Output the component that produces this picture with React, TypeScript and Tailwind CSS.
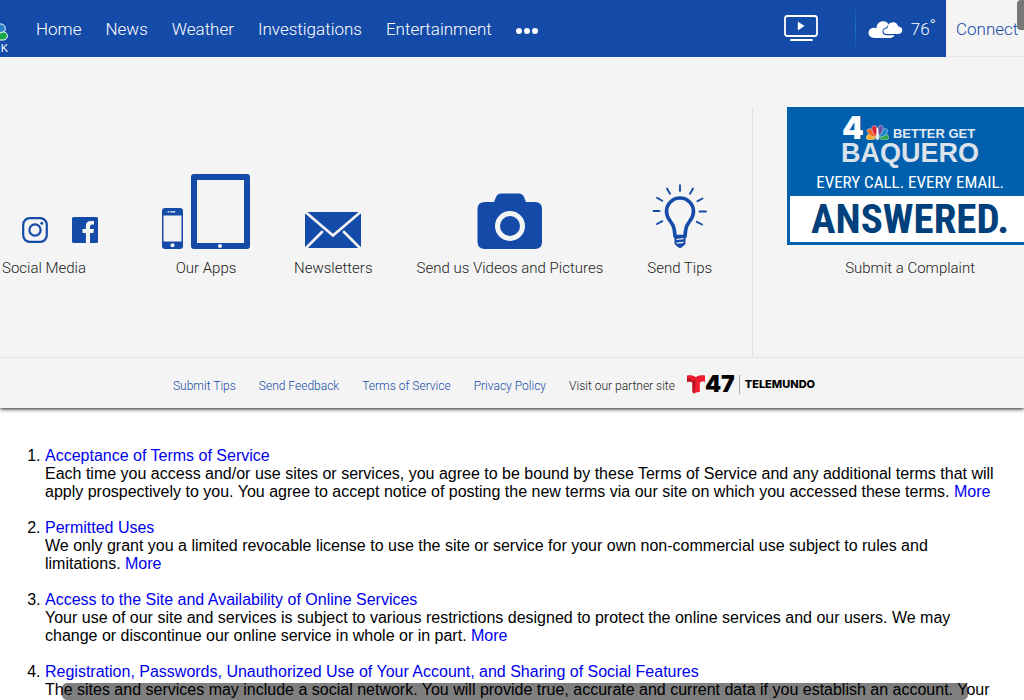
import React from "react";

const navLinks = ["Home", "News", "Weather", "Investigations", "Entertainment"];
const footerLinks = ["Submit Tips", "Send Feedback", "Terms of Service", "Privacy Policy"];

const terms = [
  {
    title: "Acceptance of Terms of Service",
    body: "Each time you access and/or use sites or services, you agree to be bound by these Terms of Service and any additional terms that will apply prospectively to you. You agree to accept notice of posting the new terms via our site on which you accessed these terms.",
    more: true,
  },
  {
    title: "Permitted Uses",
    body: "We only grant you a limited revocable license to use the site or service for your own non-commercial use subject to rules and limitations.",
    more: true,
  },
  {
    title: "Access to the Site and Availability of Online Services",
    body: "Your use of our site and services is subject to various restrictions designed to protect the online services and our users. We may change or discontinue our online service in whole or in part.",
    more: true,
  },
  {
    title: "Registration, Passwords, Unauthorized Use of Your Account, and Sharing of Social Features",
    body: "The sites and services may include a social network. You will provide true, accurate and current data if you establish an account. Your",
    more: false,
  },
];

function StationLogo() {
  return (
    <a href="#" aria-label="Station home" className="flex h-full w-2 shrink-0 flex-col justify-end overflow-hidden pb-[3px]">
      <svg width="8" height="19" viewBox="0 0 8 19" className="shrink-0">
        <ellipse cx="0.500" cy="5.500" rx="4.800" ry="4.600" fill="#2583c6" stroke="#fff" strokeWidth="1" />
        <path d="M-4 17V12.500C-1 12.500 0 8.700 3.400 8.900C6.200 9.100 7.500 11 7.400 13C7.300 15.200 5.600 17 3.500 17Z" fill="#16a84a" stroke="#fff" strokeWidth="1" />
      </svg>
      <span className="flex h-3 justify-end font-['Liberation_Sans',sans-serif] text-[11px] leading-3 font-normal text-white">K</span>
    </a>
  );
}

function Header() {
  return (
    <header className="relative z-10 flex h-[57px] w-full items-center bg-[#144ba8] font-['Roboto',sans-serif] font-light">
      <StationLogo />
      <nav className="ml-7 flex items-center gap-6 text-[17px] leading-6 text-white">
        {navLinks.map((l) => (
          <a key={l} href="#" className="whitespace-nowrap">{l}</a>
        ))}
        <button type="button" aria-label="More sections" className="pt-1">
          <svg width="23" height="8" viewBox="0 0 23 8" fill="#fff">
            <circle cx="3" cy="4" r="3" />
            <circle cx="11" cy="4" r="3" />
            <circle cx="19" cy="4" r="3" />
          </svg>
        </button>
      </nav>
      <div className="ml-auto flex h-full items-center">
        <a href="#" aria-label="Watch TV" className="mr-9 pb-[2px]">
          <svg width="36" height="28" viewBox="0 0 36 28" fill="none" stroke="#fff">
            <rect x="2" y="2" width="32" height="20" rx="2.500" strokeWidth="1.800" />
            <path d="M14.800 7.500L21.500 12L14.800 16.500Z" fill="#fff" stroke="none" />
            <path d="M8 26H29" strokeWidth="1.800" strokeLinecap="round" />
          </svg>
        </a>
        <a href="#" className="flex h-full items-center text-white">
          <span className="h-[50px] w-px bg-linear-to-b from-[#144ba8] via-[#1b73c8] to-[#144ba8]" />
          <svg width="36" height="20" viewBox="0 0 36 20" className="mt-[2px] ml-3" fill="#fff">
            <path d="M6.500 18C3 18 0.500 15.800 0.500 12.800C0.500 10 2.600 8 5.600 7.700C5.900 7.500 8 7.900 8.600 8.300C8.300 4.500 11 1.600 14.500 1.300C17.400 1 19.700 2.500 20.700 4.500C19.300 5.300 18.800 6.300 18.500 7.500C15.500 8 14.200 9.800 14.500 12C14.800 14.200 16.500 15.200 19 15.200H26.500C25.500 17 24 18 22 18Z" />
            <path d="M19 14C16.800 14 15.500 12.700 15.500 11C15.500 9.200 17.100 8.200 19.500 8.500C19.500 5 21.500 2.200 25 2.200C28 2.200 29.800 4.200 30.100 6.500C32.500 6.500 34.300 8 34.300 10.200C34.300 12.500 32.500 14 30 14Z" />
          </svg>
          <span className="ml-[7px] text-[17px] leading-6">76</span>
          <span className="mr-[10px] mb-2 text-[17px] leading-6">°</span>
        </a>
        <a href="#" className="flex h-full w-[78px] items-center border-b border-[#e6e6e6] bg-[#f4f4f4] pt-[3px] pl-[10px] text-[17px] text-[#144ba8]">
          Connect
        </a>
      </div>
    </header>
  );
}

function AppsIcon() {
  return (
    <svg width="88" height="76" viewBox="0 0 88 76" fill="#144ba8">
      <path fillRule="evenodd" d="M3 35H18A3 3 0 0 1 21 38V73A3 3 0 0 1 18 76H3A3 3 0 0 1 0 73V38A3 3 0 0 1 3 35ZM1.500 42.500V68.500H19.500V42.500Z" />
      <path fillRule="evenodd" d="M32 1H85A3 3 0 0 1 88 4V73A3 3 0 0 1 85 76H32A3 3 0 0 1 29 73V4A3 3 0 0 1 32 1ZM35 7V70H82V7Z" />
      <path d="M6 38.800H13" stroke="#f4f4f4" strokeWidth="1.200" strokeLinecap="round" strokeDasharray="1 1.700 6" />
      <circle cx="10.500" cy="72.200" r="2" fill="#f4f4f4" />
      <circle cx="58" cy="73" r="2" fill="#f4f4f4" />
    </svg>
  );
}

function MailIcon() {
  return (
    <svg width="58" height="38" viewBox="0 0 58 38">
      <rect x="1" y="1" width="56" height="36" fill="#144ba8" />
      <path d="M2 1.500L29 24.500L56 1.500M2 37L18 21M56 37L40 21" fill="none" stroke="#f4f4f4" strokeWidth="2.600" strokeLinecap="round" />
    </svg>
  );
}

function CameraIcon() {
  return (
    <svg width="66" height="56" viewBox="0 0 66 56">
      <path d="M8 9H17L19 4Q20.500 0.500 24 0.500H42Q45.500 0.500 47 4L49 9H58Q65 9 65 16V49Q65 56 58 56H8Q0.500 56 0.500 49V16Q0.500 9 8 9Z" fill="#144ba8" />
      <circle cx="33" cy="33" r="12.500" fill="none" stroke="#f4f4f4" strokeWidth="5" />
    </svg>
  );
}

function BulbIcon() {
  return (
    <svg width="56" height="65" viewBox="0 0 56 65" fill="none" stroke="#144ba8">
      <path d="M23 52.500C22.500 44 21.500 41.500 18.500 37.500C15.700 34 14.500 31.500 14.500 27.500A13.500 13.500 0 0 1 41.500 27.500C41.500 31.500 40.300 34 37.500 37.500C34.500 41.500 33.500 44 33 52.500Z" strokeWidth="3.600" strokeLinejoin="round" />
      <path d="M23 52V59.500Q23 61 25 61.500Q26 63.500 28 63.500T31 61.500Q33 61 33 59.500V52Z" fill="#144ba8" strokeWidth="1" />
      <path d="M24.500 55.500L31.500 54.700M24.500 59.200L31.500 58.400" stroke="#f4f4f4" strokeWidth="1.200" />
      <path d="M28 1.200V7M15 4.500L18 9.800M41 4.500L38 9.800M5 13.800L10.200 16.800M50.500 14.500L45.500 17.200M1.500 27H7.500M47.500 27.500H54M5 40L10.300 37.200M50 40.500L44.800 37.800" strokeWidth="1.900" strokeLinecap="round" />
    </svg>
  );
}

function SocialItem() {
  return (
    <div className="mr-5 flex shrink-0 flex-col items-center gap-[9px]">
      <div className="mb-[6px] ml-[22px] flex gap-6">
        <a href="#" aria-label="Instagram">
          <svg width="26" height="26" viewBox="0 0 26 26" fill="none" stroke="#144ba8" strokeWidth="2.200">
            <rect x="1.200" y="1.200" width="23.600" height="23.600" rx="6.500" />
            <circle cx="13" cy="13" r="5.600" />
            <circle cx="19.800" cy="6.200" r="1.500" fill="#144ba8" stroke="none" />
          </svg>
        </a>
        <a href="#" aria-label="Facebook">
          <svg width="26" height="26" viewBox="0 0 26 26" fill="#144ba8">
            <path d="M1.500 0H24.500Q26 0 26 1.500V24.500Q26 26 24.500 26H18V16H21.400L21.900 12H18V9.500Q18 7.600 20 7.600H22V4.100Q20.600 3.900 19 3.900Q13.900 3.900 13.900 9V12H10.500V16H13.900V26H1.500Q0 26 0 24.500V1.500Q0 0 1.500 0Z" />
          </svg>
        </a>
      </div>
      <span className="self-start pl-[2px]">Social Media</span>
    </div>
  );
}

function Feature({ label, children }: { label: string; children: React.ReactNode }) {
  return (
    <a href="#" className="flex shrink-0 flex-col items-center gap-[9px] whitespace-nowrap">
      {children}
      <span>{label}</span>
    </a>
  );
}

function PeacockIcon() {
  return (
    <svg width="23" height="15" viewBox="0 0 23 15" stroke="#fff" strokeWidth="0.400">
      <ellipse cx="5" cy="12" rx="5" ry="2.800" fill="#f3b229" transform="rotate(-6 5 12)" />
      <ellipse cx="18" cy="12" rx="5" ry="2.800" fill="#31a54a" transform="rotate(6 18 12)" />
      <ellipse cx="5.800" cy="7.800" rx="5.400" ry="3" fill="#ec6a23" transform="rotate(38 5.800 7.800)" />
      <ellipse cx="17.200" cy="7.800" rx="5.400" ry="3" fill="#1b83c8" transform="rotate(-38 17.200 7.800)" />
      <ellipse cx="9" cy="5.300" rx="2.800" ry="5" fill="#d9243c" transform="rotate(-16 9 5.300)" />
      <ellipse cx="14" cy="5.300" rx="2.800" ry="5" fill="#6554a4" transform="rotate(16 14 5.300)" />
      <path d="M10.500 3.500L12 3L12.700 14.500H10.300L11 5Z" fill="#fff" />
    </svg>
  );
}

function ComplaintBanner() {
  return (
    <div className="flex h-[138px] w-[246px] flex-col items-center bg-[#0060ae] px-[3px] pb-[3px] text-white">
      <div className="flex w-[136px] items-end pt-2">
        <span className="font-['Inter',sans-serif] text-[31px] leading-[26px] font-black">4</span>
        <span className="ml-[2px] pb-[1px]"><PeacockIcon /></span>
        <span className="ml-1 font-['Liberation_Sans',sans-serif] text-[13px] leading-[14px] font-bold whitespace-nowrap text-[#e2e9f2]">BETTER GET</span>
      </div>
      <span className="font-['Liberation_Sans',sans-serif] text-[27px] leading-6 font-bold text-[#dbe2ea]">BAQUERO</span>
      <span className="mt-[5px] font-['Roboto_Condensed','Liberation_Sans_Narrow','Liberation_Sans',sans-serif] text-[17px] leading-6 font-normal whitespace-nowrap">EVERY CALL. EVERY EMAIL.</span>
      <span className="mt-auto flex h-[46px] w-full items-center justify-center bg-white font-['Roboto_Condensed','Liberation_Sans_Narrow','Liberation_Sans',sans-serif] text-[41px] leading-[46px] font-bold text-[#00417c]">ANSWERED.</span>
    </div>
  );
}

function FeatureMenu() {
  return (
    <section className="flex h-[301px] overflow-hidden border-b border-[#e2e2e2] pt-[50px] text-[15px] leading-5 text-[#222]">
      <div className="flex h-[171px] shrink-0 items-end gap-11 pr-10">
        <SocialItem />
        <Feature label="Our Apps"><AppsIcon /></Feature>
        <Feature label="Newsletters"><MailIcon /></Feature>
        <Feature label="Send us Videos and Pictures"><CameraIcon /></Feature>
        <Feature label="Send Tips"><BulbIcon /></Feature>
      </div>
      <div className="shrink-0 border-l border-[#e2e2e2] pl-[34px]">
        <a href="#" className="flex flex-col items-center gap-[13px]">
          <ComplaintBanner />
          <span>Submit a Complaint</span>
        </a>
      </div>
    </section>
  );
}

function TelemundoLogo() {
  return (
    <a href="#" className="-ml-[11px] flex items-center pb-1 text-black">
      <svg width="18" height="19" viewBox="0 0 18 19">
        <path d="M0 0.500C3.500 0 6 0.300 8.800 2.200C11.500 0.300 14.500 0 18 0.500V7C15.500 6.200 13.800 6.500 12.800 8V17Q9.500 16.500 7 18.500L5.500 17V8C4.300 6.500 2.500 6.200 0 7Z" fill="#ed1c2e" />
        <path d="M0 2.500L6.500 6.500L5.500 8C4.300 6.500 2.500 6.200 0 7ZM6.500 6.500L8.300 4.200L8.500 9L7 18.500L5.500 17V8Z" fill="#b31220" />
      </svg>
      <span className="font-['Inter',sans-serif] text-[23px] leading-5 font-black">47</span>
      <span className="ml-1 h-[19px] w-px bg-[#aaa]" />
      <span className="ml-[5px] font-['Inter',sans-serif] text-[11px] leading-5 font-extrabold">TELEMUNDO</span>
    </a>
  );
}

export default function App() {
  return (
    <div className="min-h-screen overflow-hidden bg-white">
      <Header />
      <div className="bg-[#f4f4f4] font-['Roboto',sans-serif] font-light shadow-[0_1px_4px_rgba(0,0,0,0.9)]">
        <FeatureMenu />
        <nav className="flex h-[50px] items-center gap-[23px] pt-[6px] pl-[173px] text-[12px] leading-4 whitespace-nowrap text-[#144ba8]">
          {footerLinks.map((l) => (
            <a key={l} href="#">{l}</a>
          ))}
          <span className="text-[#222]">Visit our partner site</span>
          <TelemundoLogo />
        </nav>
      </div>
      <main className="pt-[39px] pr-6 pl-[45px] font-['Liberation_Sans',sans-serif] text-[16px] leading-[18px] text-black">
        <ol className="flex list-decimal flex-col gap-[18px]">
          {terms.map((t) => (
            <li key={t.title}>
              <a href="#" className="text-[#0000ee]">{t.title}</a>
              <p>
                {t.body}
                {t.more && <> <a href="#" className="text-[#0000ee]">More</a></>}
              </p>
            </li>
          ))}
        </ol>
      </main>
      <div aria-hidden="true" className="fixed top-0 right-0 z-20 h-[30px] w-[7px] rounded-l bg-[#777]" />
      <div aria-hidden="true" className="fixed right-14 bottom-0 left-[62px] h-[17px] rounded-[5px] bg-black/50" />
    </div>
  );
}
